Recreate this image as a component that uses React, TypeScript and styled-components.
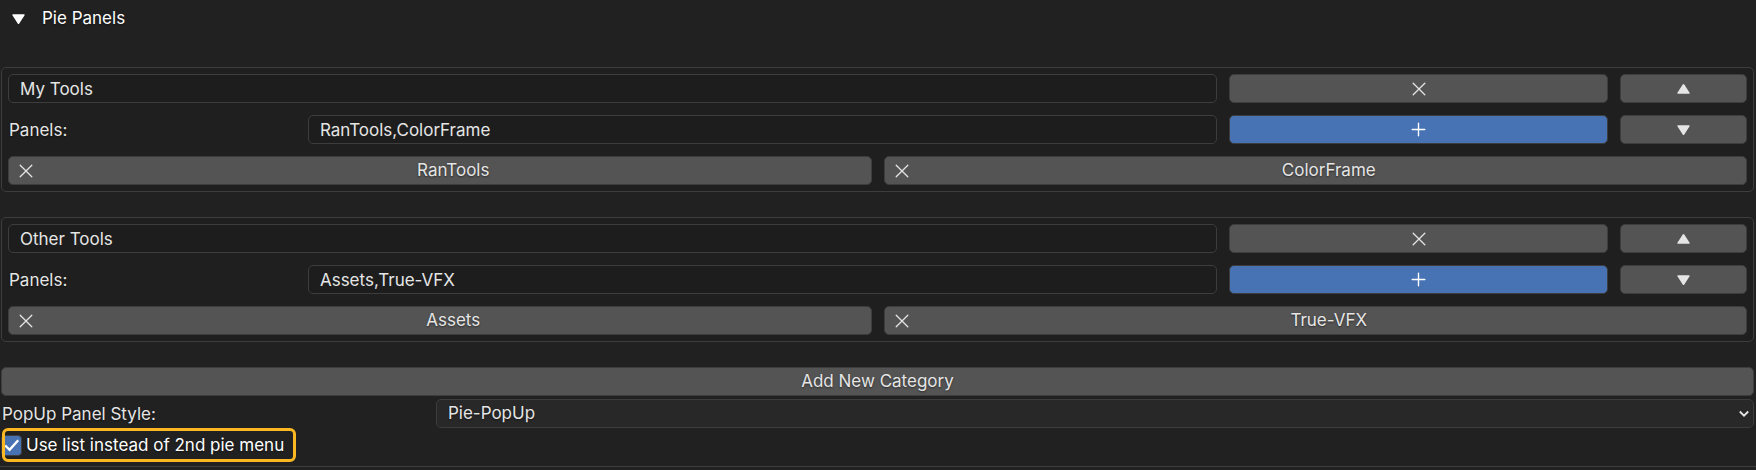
import React from "react";
import styled, { createGlobalStyle, css } from "styled-components";

const GlobalStyle = createGlobalStyle`
  *, *::before, *::after { box-sizing: border-box; }
  body {
    margin: 0;
    min-height: 100vh;
    background: #212121;
    color: #e5e5e5;
    font-family: Inter, "Liberation Sans", sans-serif;
    font-size: 17px;
    line-height: 21px;
  }
  button, input, select { font: inherit; color: inherit; margin: 0; }
`;

const textShadow = css`
  text-shadow: 0 1px 2px rgba(0, 0, 0, 0.5);
`;

const widget = css`
  height: 29px;
  border: 1px solid #3d3d3d;
  border-radius: 5px;
  min-width: 0;
`;

const Page = styled.main`
  display: flex;
  flex-direction: column;
`;

const Header = styled.h2`
  margin: 0;
  height: 67px;
  padding-top: 8px;
  font-size: 17px;
  font-weight: 400;
`;

const HeaderToggle = styled.button`
  display: flex;
  align-items: center;
  gap: 17px;
  padding: 0 0 0 12px;
  border: 0;
  background: none;
  color: #fff;
  ${textShadow}
`;

const Content = styled.div`
  display: flex;
  flex-direction: column;
  gap: 25px;
  padding: 0 2px 0 1px;
`;

const CategoryBox = styled.section`
  display: flex;
  flex-direction: column;
  gap: 12px;
  padding: 6px;
  border: 1px solid #3d3d3d;
  border-radius: 5px;
  background: #1f1f1f;
`;

const Row = styled.div<{ $columns: string; $gap?: number }>`
  display: grid;
  grid-template-columns: ${(p) => p.$columns};
  column-gap: ${(p) => p.$gap ?? 12}px;
  align-items: center;
`;

const FieldLabel = styled.label`
  padding: 1px 0 0 1px;
  white-space: nowrap;
  ${textShadow}
`;

const TextField = styled.input`
  ${widget}
  width: 100%;
  padding: 0 11px;
  background: #1d1d1d;
  outline: none;
`;

const Button = styled.button<{ $active?: boolean }>`
  ${widget}
  display: flex;
  align-items: center;
  justify-content: center;
  padding: 0;
  background: ${(p) => (p.$active ? "#4772b3" : "#545454")};
  ${(p) => p.$active && "color: #fff;"}
  ${textShadow}
`;

const TagButton = styled(Button)`
  padding-left: 10px;
  gap: 3px;
`;

const TagName = styled.span`
  flex: 1;
  text-align: center;
`;

const Settings = styled.div`
  display: flex;
  flex-direction: column;
  gap: 3px;
`;

const SelectWrap = styled.div`
  display: grid;
  align-items: center;
  & > * { grid-area: 1 / 1; }
  & > svg { justify-self: end; margin-right: 5px; pointer-events: none; }
`;

const Select = styled.select`
  ${widget}
  width: 100%;
  padding: 0 11px;
  appearance: none;
  background: #282828;
  outline: none;
  ${textShadow}
`;

const CheckLabel = styled.label`
  position: relative;
  align-self: flex-start;
  display: flex;
  align-items: center;
  gap: 4px;
  height: 29px;
  padding-right: 12px;
  color: #fff;
  ${textShadow}
  &::after {
    content: "";
    position: absolute;
    inset: -3px 0 -2px 1px;
    border: 3px solid #fcb822;
    border-radius: 6px;
    pointer-events: none;
  }
`;

const CheckMark = styled.span`
  display: grid;
  & > * { grid-area: 1 / 1; }
  & > svg { pointer-events: none; }
`;

const CheckInput = styled.input`
  appearance: none;
  width: 21px;
  height: 21px;
  border: 1px solid #3d3d3d;
  border-radius: 4px;
  background: #545454;
  &:checked { background: #4772b3; }
`;

const Divider = styled.hr`
  width: 100%;
  margin: 6px 0 0;
  border: 0;
  border-top: 1px solid #3d3d3d;
`;

const CrossIcon = () => (
  <svg width="14" height="14" viewBox="0 0 14 14" fill="none" stroke="currentColor" strokeWidth="1.3" strokeLinecap="round" aria-hidden="true">
    <path d="M1.2 1.2 12.8 12.8M12.8 1.2 1.2 12.8" />
  </svg>
);

const PlusIcon = () => (
  <svg width="15" height="15" viewBox="0 0 15 15" fill="none" stroke="currentColor" strokeWidth="1.4" strokeLinecap="round" aria-hidden="true">
    <path d="M7.5 1.2v12.6M1.2 7.5h12.6" />
  </svg>
);

const TriangleIcon = ({ up = false }: { up?: boolean }) => (
  <svg width="13" height="10" viewBox="0 0 13 10" fill="currentColor" aria-hidden="true">
    <path d={up ? "M6.5 .1q.5 0 .8.5l5.3 8.2q.5 1-.6 1H1q-1.1 0-.6-1L5.7.6q.3-.5.8-.5z" : "M6.5 9.9q.5 0 .8-.5l5.3-8.2q.5-1-.6-1H1q-1.1 0-.6 1l5.3 8.2q.3.5.8.5z"} />
  </svg>
);

const ChevronIcon = () => (
  <svg width="10" height="8" viewBox="0 0 10 8" fill="none" stroke="currentColor" strokeWidth="1.8" aria-hidden="true">
    <path d="M.8 1.5 5 5.7 9.2 1.5" />
  </svg>
);

const TickIcon = () => (
  <svg width="21" height="21" viewBox="0 0 21 21" fill="none" stroke="#fff" strokeWidth="2.4" aria-hidden="true">
    <path d="M4.2 10.5 8.6 14.8 17.2 5.2" />
  </svg>
);

interface Category {
  id: string;
  name: string;
  panels: string[];
}

const categories: Category[] = [
  { id: "my-tools", name: "My Tools", panels: ["RanTools", "ColorFrame"] },
  { id: "other-tools", name: "Other Tools", panels: ["Assets", "True-VFX"] },
];

const CategoryEditor = ({ id, name, panels }: Category) => (
  <CategoryBox>
    <Row $columns="7fr 3fr">
      <TextField aria-label="Category name" defaultValue={name} />
      <Row $columns="3fr 1fr">
        <Button type="button" aria-label="Remove category"><CrossIcon /></Button>
        <Button type="button" aria-label="Move up"><TriangleIcon up /></Button>
      </Row>
    </Row>
    <Row $columns="7fr 3fr">
      <Row $columns="33fr 100fr" $gap={0}>
        <FieldLabel htmlFor={`${id}-panels`}>Panels:</FieldLabel>
        <TextField id={`${id}-panels`} defaultValue={panels.join(",")} />
      </Row>
      <Row $columns="3fr 1fr">
        <Button type="button" $active aria-label="Add panel"><PlusIcon /></Button>
        <Button type="button" aria-label="Move down"><TriangleIcon /></Button>
      </Row>
    </Row>
    <Row $columns="1fr 1fr">
      {panels.map((panel) => (
        <TagButton type="button" key={panel}>
          <CrossIcon />
          <TagName>{panel}</TagName>
        </TagButton>
      ))}
    </Row>
  </CategoryBox>
);

export default function App() {
  return (
    <>
      <GlobalStyle />
      <Page>
        <Header>
          <HeaderToggle type="button" aria-expanded="true">
            <TriangleIcon />
            Pie Panels
          </HeaderToggle>
        </Header>
        <Content>
          {categories.map((category) => (
            <CategoryEditor key={category.id} {...category} />
          ))}
          <Settings>
            <Button type="button">Add New Category</Button>
            <Row $columns="33fr 100fr" $gap={0}>
              <FieldLabel htmlFor="popup-style">PopUp Panel Style:</FieldLabel>
              <SelectWrap>
                <Select id="popup-style" defaultValue="pie">
                  <option value="pie">Pie-PopUp</option>
                </Select>
                <ChevronIcon />
              </SelectWrap>
            </Row>
            <CheckLabel>
              <CheckMark>
                <CheckInput type="checkbox" defaultChecked />
                <TickIcon />
              </CheckMark>
              Use list instead of 2nd pie menu
            </CheckLabel>
          </Settings>
        </Content>
        <Divider />
      </Page>
    </>
  );
}
